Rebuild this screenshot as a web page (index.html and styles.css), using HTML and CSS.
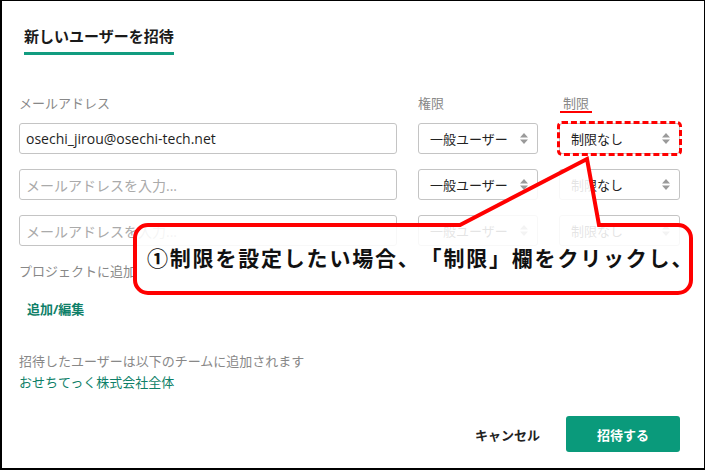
FILE: index.html
```html
<!DOCTYPE html>
<html lang="ja">
<head>
    <meta charset="UTF-8">
    <meta name="viewport" content="width=device-width, initial-scale=1.0">
    <title>新しいユーザーを招待</title>
    <link rel="stylesheet" href="styles.css">
</head>
<body>
    <div class="frame">
        <div class="tabs">
            <span class="tab">新しいユーザーを招待</span>
        </div>

        <div class="invite-grid">
            <div class="label">メールアドレス</div>
            <div class="label">権限</div>
            <div class="label"><span class="marked">制限</span></div>

            <div class="input">osechi_jirou@osechi-tech.net</div>
            <div class="select"><span>一般ユーザー</span><svg class="arrows" width="8" height="11" viewBox="0 0 8 11"><path d="M0 4.5 L4 0 L8 4.5 Z M0 6.5 L4 11 L8 6.5 Z" fill="#9a9a9a"/></svg></div>
            <div class="select highlight"><span>制限なし</span><svg class="arrows" width="8" height="11" viewBox="0 0 8 11"><path d="M0 4.5 L4 0 L8 4.5 Z M0 6.5 L4 11 L8 6.5 Z" fill="#9a9a9a"/></svg></div>

            <div class="input placeholder">メールアドレスを入力...</div>
            <div class="select"><span>一般ユーザー</span><svg class="arrows" width="8" height="11" viewBox="0 0 8 11"><path d="M0 4.5 L4 0 L8 4.5 Z M0 6.5 L4 11 L8 6.5 Z" fill="#9a9a9a"/></svg></div>
            <div class="select"><span>制限なし</span><svg class="arrows" width="8" height="11" viewBox="0 0 8 11"><path d="M0 4.5 L4 0 L8 4.5 Z M0 6.5 L4 11 L8 6.5 Z" fill="#9a9a9a"/></svg></div>

            <div class="input placeholder">メールアドレスを入力...</div>
            <div class="select"><span>一般ユーザー</span><svg class="arrows" width="8" height="11" viewBox="0 0 8 11"><path d="M0 4.5 L4 0 L8 4.5 Z M0 6.5 L4 11 L8 6.5 Z" fill="#9a9a9a"/></svg></div>
            <div class="select"><span>制限なし</span><svg class="arrows" width="8" height="11" viewBox="0 0 8 11"><path d="M0 4.5 L4 0 L8 4.5 Z M0 6.5 L4 11 L8 6.5 Z" fill="#9a9a9a"/></svg></div>
        </div>

        <div class="project-label">プロジェクトに追加</div>
        <a class="edit-link">追加/編集</a>

        <div class="team-note">
            <div>招待したユーザーは以下のチームに追加されます</div>
            <div class="team-name">おせちてっく株式会社全体</div>
        </div>

        <div class="footer">
            <button class="btn-cancel">キャンセル</button>
            <button class="btn-invite">招待する</button>
        </div>
    </div>

    <svg class="callout-shape" width="705" height="470" viewBox="0 0 705 470">
        <path d="M148 225 H460 L587 159 L599 225 H678 A13 13 0 0 1 691 238 V280 A13 13 0 0 1 678 293 H148 A13 13 0 0 1 135 280 V238 A13 13 0 0 1 148 225 Z"
              fill="rgba(255,255,255,0.88)" stroke="#ff0000" stroke-width="4" stroke-linejoin="miter"/>
    </svg>
    <div class="callout-text">①制限を設定したい場合、「制限」欄をクリックし、</div>
</body>
</html>
```

FILE: styles.css
```css
body {
    margin: 0;
    font-family: "Open Sans", "Noto Sans CJK JP", sans-serif;
    background: #fff;
    color: #222;
    text-spacing-trim: space-all;
}
.frame {
    box-sizing: border-box;
    width: 705px;
    height: 470px;
    border-style: solid;
    border-color: #000;
    border-width: 1px 1px 2px 2px;
    padding: 0 24px 0 17px;
}
.tabs {
    display: flex;
    padding-top: 25px;
    padding-left: 5px;
}
.tab {
    font-size: 15px;
    font-weight: 700;
    line-height: 20px;
    color: #1a1a1a;
    padding-bottom: 6px;
    border-bottom: 3px solid #129c80;
}
.invite-grid {
    display: grid;
    grid-template-columns: 378px 120px 121px;
    column-gap: 21px;
    row-gap: 15px;
    margin-top: 40px;
}
.label {
    font-size: 13px;
    line-height: 17px;
    color: #888;
    margin-bottom: -5px;
}
.marked {
    display: inline-block;
    margin-left: 1px;
    padding: 0 3px;
    line-height: 16px;
    border-bottom: 2px solid #ff0000;
}
.input,
.select {
    box-sizing: border-box;
    height: 31px;
    border: 1px solid #c4c4c4;
    border-radius: 3px;
    display: flex;
    align-items: center;
}
.input {
    padding: 0 6px;
    font-size: 14px;
    color: #1f1f1f;
}
.placeholder {
    color: #aaa;
}
.select {
    justify-content: space-between;
    padding: 0 9px 0 11px;
    font-size: 13px;
    color: #222;
}
.highlight {
    outline: 3px dashed #ff0000;
    outline-offset: -1px;
}
.project-label {
    margin-top: 17px;
    font-size: 13px;
    line-height: 17px;
    color: #888;
}
.edit-link {
    display: block;
    width: max-content;
    margin-top: 21px;
    margin-left: 8px;
    font-size: 13px;
    line-height: 17px;
    font-weight: 700;
    color: #0e7f68;
}
.team-note {
    margin-top: 33px;
    font-size: 13px;
    line-height: 21px;
    color: #888;
}
.team-name {
    color: #0e7f68;
}
.footer {
    display: flex;
    justify-content: flex-end;
    align-items: center;
    gap: 22px;
    margin-top: 23px;
}
.footer button {
    font-family: inherit;
    font-size: 13px;
    font-weight: 700;
    border: none;
    cursor: pointer;
}
.btn-cancel {
    background: none;
    color: #222;
    padding: 0 4px;
}
.btn-invite {
    width: 114px;
    height: 36px;
    border-radius: 3px;
    background: #0a9a7b;
    color: #fff;
}
.callout-shape {
    position: absolute;
    left: 0;
    top: 0;
}
.callout-text {
    position: absolute;
    left: 147px;
    top: 246px;
    font-size: 21px;
    font-weight: 700;
    line-height: 24px;
    letter-spacing: 1.8px;
    color: #111;
    white-space: nowrap;
}
```
